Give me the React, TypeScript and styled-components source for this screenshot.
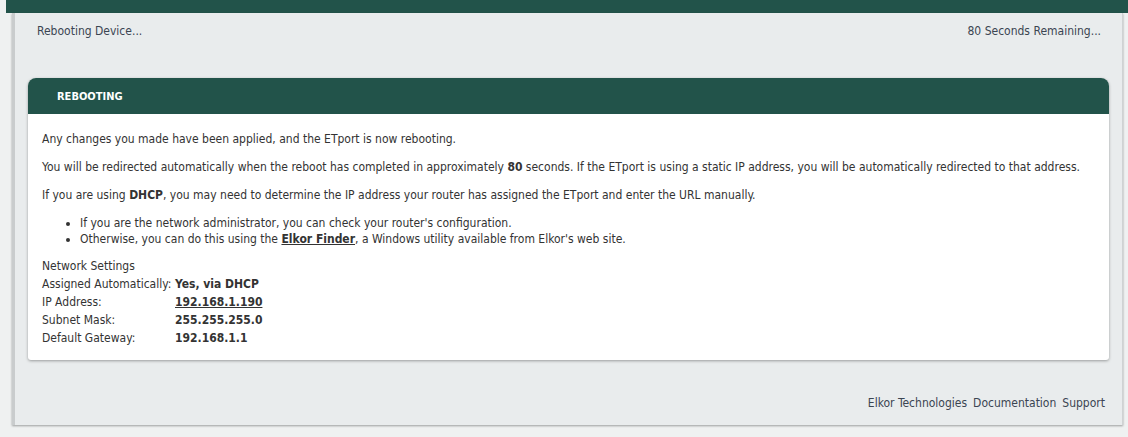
import React from "react";
import styled, { createGlobalStyle } from "styled-components";

const GlobalStyle = createGlobalStyle`
  html, body {
    margin: 0;
    padding: 0;
    background: #eff1f1;
    overflow: hidden;
  }
  body {
    font-family: "DejaVu Sans Condensed", Tahoma, "Liberation Sans", sans-serif;
    font-size: 12px;
    color: #333333;
  }
`;

const Page = styled.div`
  margin-left: 6px;
  height: 437px;
  display: flex;
  flex-direction: column;
`;

const TopBar = styled.div`
  height: 13px;
  flex: none;
  background: #22534a;
`;

const Main = styled.main`
  margin: 0 5px 0 6px;
  height: 412px;
  flex: none;
  box-sizing: border-box;
  background: #e9eced;
  border-left: 3px solid #c9cccd;
  border-right: 1px solid #cfd2d3;
  box-shadow: 0 1px 2px rgba(0, 0, 0, 0.35);
  display: flex;
  flex-direction: column;
  padding: 0 13px 0 13px;
`;

const StatusRow = styled.div`
  display: flex;
  justify-content: space-between;
  align-items: center;
  height: 14px;
  line-height: 14px;
  margin-top: 11px;
  padding: 0 8px 0 9px;
  color: #3b4552;
`;

const Panel = styled.section`
  margin-top: 40px;
  background: #ffffff;
  border-radius: 8px 8px 3px 3px;
  box-shadow: 0 1px 3px rgba(0, 0, 0, 0.35);
  overflow: hidden;
`;

const PanelHeader = styled.h2`
  margin: 0;
  height: 36px;
  line-height: 38px;
  padding-left: 29px;
  background: #22534a;
  color: #ffffff;
  font-size: 11px;
  font-weight: bold;
`;

const PanelBody = styled.div`
  padding: 18px 14px 13px 14px;
  line-height: 14px;
`;

const Para = styled.p`
  margin: 0 0 14px 0;
`;

const BulletList = styled.ul`
  margin: -1px 0 10px 0;
  padding-left: 38px;
  line-height: 16px;
  list-style: disc;
`;

const Strong = styled.b`
  font-weight: bold;
`;

const Link = styled.a`
  color: #333333;
  font-weight: bold;
  text-decoration: underline;
`;

const SettingsTitle = styled.div`
  height: 18px;
  line-height: 18px;
`;

const SettingsGrid = styled.div`
  display: grid;
  grid-template-columns: 133px auto;
  grid-auto-rows: 18px;
  line-height: 18px;
`;

const Value = styled.span`
  font-weight: bold;
`;

const Footer = styled.footer`
  margin-top: auto;
  margin-bottom: 15px;
  display: flex;
  justify-content: flex-end;
  gap: 6px;
  padding-right: 4px;
  line-height: 14px;
`;

const FooterLink = styled.a`
  color: #3b4552;
  text-decoration: none;
`;

export default function App() {
  return (
    <>
      <GlobalStyle />
      <Page>
        <TopBar />
        <Main>
          <StatusRow>
            <span>Rebooting Device...</span>
            <span>80 Seconds Remaining...</span>
          </StatusRow>
          <Panel>
            <PanelHeader>REBOOTING</PanelHeader>
            <PanelBody>
              <Para>Any changes you made have been applied, and the ETport is now rebooting.</Para>
              <Para>
                You will be redirected automatically when the reboot has completed in approximately{" "}
                <Strong>80</Strong> seconds. If the ETport is using a static IP address, you will be
                automatically redirected to that address.
              </Para>
              <Para>
                If you are using <Strong>DHCP</Strong>, you may need to determine the IP address your
                router has assigned the ETport and enter the URL manually.
              </Para>
              <BulletList>
                <li>If you are the network administrator, you can check your router's configuration.</li>
                <li>
                  Otherwise, you can do this using the <Link href="#">Elkor Finder</Link>, a Windows
                  utility available from Elkor's web site.
                </li>
              </BulletList>
              <SettingsTitle>Network Settings</SettingsTitle>
              <SettingsGrid>
                <span>Assigned Automatically:</span>
                <Value>Yes, via DHCP</Value>
                <span>IP Address:</span>
                <Value>
                  <Link href="#">192.168.1.190</Link>
                </Value>
                <span>Subnet Mask:</span>
                <Value>255.255.255.0</Value>
                <span>Default Gateway:</span>
                <Value>192.168.1.1</Value>
              </SettingsGrid>
            </PanelBody>
          </Panel>
          <Footer>
            <FooterLink href="#">Elkor Technologies</FooterLink>
            <FooterLink href="#">Documentation</FooterLink>
            <FooterLink href="#">Support</FooterLink>
          </Footer>
        </Main>
      </Page>
    </>
  );
}
